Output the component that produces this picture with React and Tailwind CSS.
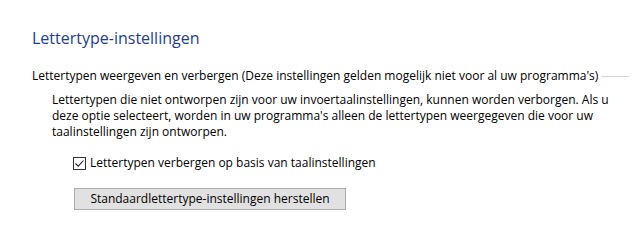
export default function App() {
  return (
    <div className="w-[640px] h-[227px] bg-white overflow-hidden text-[#000000]" style={{ fontFamily: '"Open Sans", "Noto Sans", sans-serif' }}>
      <div className="pl-[32px] pt-[27px]">
        <h1 className="text-[16px] leading-[22px] text-[#1e3c96] font-normal">Lettertype-instellingen</h1>
        <div className="mt-[19px] flex items-center gap-[3px] text-[12px] leading-[16px]">
          <span className="whitespace-nowrap">Lettertypen weergeven en verbergen (Deze instellingen gelden mogelijk niet voor al uw programma's)</span>
          <div className="flex-1 h-px bg-[#d5d5d5] mr-[11px]"></div>
        </div>
        <div className="pl-[20px] mt-[8px] pr-[14px] text-[12px] leading-[16px]">
          <p>Lettertypen die niet ontworpen zijn voor uw invoertaalinstellingen, kunnen worden verborgen. Als u deze optie selecteert, worden in uw programma's alleen de lettertypen weergegeven die voor uw taalinstellingen zijn ontworpen.</p>
          <div className="pl-[21px] mt-[15px] flex items-center gap-[4px]">
            <div className="w-[13px] h-[13px] border border-[#333333] bg-white flex items-center justify-center">
              <svg width="11" height="11" viewBox="0 0 11 11"><path d="M1.5 5.5 L4.2 8.2 L9.5 2.5" fill="none" stroke="#222" strokeWidth="1.1" /></svg>
            </div>
            <span>Lettertypen verbergen op basis van taalinstellingen</span>
          </div>
          <div className="pl-[22px] mt-[17px]">
            <button className="w-[272px] h-[22px] bg-[#e1e1e1] border border-[#adadad] text-[12px] leading-[16px] text-black">Standaardlettertype-instellingen herstellen</button>
          </div>
        </div>
      </div>
    </div>
  );
}
